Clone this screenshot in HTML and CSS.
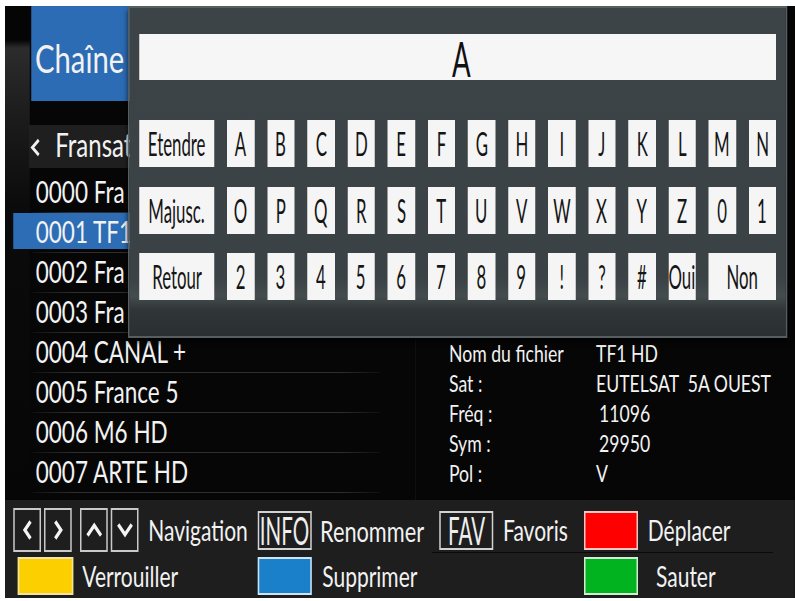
FILE: index.html
```html
<!DOCTYPE html>
<html lang="fr">
<head>
<meta charset="utf-8">
<title>Chaîne – Renommer</title>
<link rel="stylesheet" href="styles.css">
</head>
<body>
<div class="screen">
  <div class="stage">
    <div class="main">
      <section class="list">
        <div class="title">Chaîne</div>
        <div class="group">
          <svg class="group-chev" viewBox="0 0 15 19" aria-hidden="true"><polyline points="12,2 3.5,9.5 12,17" /></svg>
          <span class="group-name">Fransat</span>
        </div>
        <ul class="channels">
          <li class="ch"><span class="ch-name">0000 Fra</span></li>
          <li class="ch sel"><span class="ch-name">0001 TF1</span></li>
          <li class="ch"><span class="ch-name">0002 Fra</span></li>
          <li class="ch"><span class="ch-name">0003 Fra</span></li>
          <li class="ch"><span class="ch-name">0004 CANAL +</span></li>
          <li class="ch"><span class="ch-name">0005 France 5</span></li>
          <li class="ch"><span class="ch-name">0006 M6 HD</span></li>
          <li class="ch"><span class="ch-name">0007 ARTE HD</span></li>
        </ul>
      </section>
      <section class="info">
        <dl class="info-grid">
          <dt>Nom du fichier</dt><dd>TF1 HD</dd>
          <dt>Sat :</dt><dd>EUTELSAT&nbsp; 5A OUEST</dd>
          <dt>Fréq :</dt><dd class="num">11096</dd>
          <dt>Sym :</dt><dd class="num">29950</dd>
          <dt>Pol :</dt><dd>V</dd>
        </dl>
      </section>
      <div class="kbd">
        <div class="kbd-input"><span class="kbd-val">A</span></div>
        <div class="keys">
          <span class="key"><b>Etendre</b></span>
          <span class="key"><b>A</b></span>
          <span class="key"><b>B</b></span>
          <span class="key"><b>C</b></span>
          <span class="key"><b>D</b></span>
          <span class="key"><b>E</b></span>
          <span class="key"><b>F</b></span>
          <span class="key"><b>G</b></span>
          <span class="key"><b>H</b></span>
          <span class="key"><b>I</b></span>
          <span class="key"><b>J</b></span>
          <span class="key"><b>K</b></span>
          <span class="key"><b>L</b></span>
          <span class="key"><b>M</b></span>
          <span class="key"><b>N</b></span>
          <span class="key"><b>Majusc.</b></span>
          <span class="key"><b>O</b></span>
          <span class="key"><b>P</b></span>
          <span class="key"><b>Q</b></span>
          <span class="key"><b>R</b></span>
          <span class="key"><b>S</b></span>
          <span class="key"><b>T</b></span>
          <span class="key"><b>U</b></span>
          <span class="key"><b>V</b></span>
          <span class="key"><b>W</b></span>
          <span class="key"><b>X</b></span>
          <span class="key"><b>Y</b></span>
          <span class="key"><b>Z</b></span>
          <span class="key"><b>0</b></span>
          <span class="key"><b>1</b></span>
          <span class="key"><b>Retour</b></span>
          <span class="key"><b>2</b></span>
          <span class="key"><b>3</b></span>
          <span class="key"><b>4</b></span>
          <span class="key"><b>5</b></span>
          <span class="key"><b>6</b></span>
          <span class="key"><b>7</b></span>
          <span class="key"><b>8</b></span>
          <span class="key"><b>9</b></span>
          <span class="key"><b>!</b></span>
          <span class="key"><b>?</b></span>
          <span class="key"><b>#</b></span>
          <span class="key"><b>Oui</b></span>
          <span class="key key-non"><b>Non</b></span>
        </div>
      </div>
    </div>
    <footer class="foot">
      <div class="f-nav">
        <span class="navk"><svg class="chev-lr" viewBox="0 0 14 22" aria-hidden="true"><polyline points="11,2.5 3.5,11 11,19.5" /></svg></span>
        <span class="navk"><svg class="chev-lr" viewBox="0 0 14 22" aria-hidden="true"><polyline points="3,2.5 10.5,11 3,19.5" /></svg></span>
        <span class="navk navk-gap"><svg class="chev-ud" viewBox="0 0 24 16" aria-hidden="true"><polyline points="3,13.5 12,3.5 21,13.5" /></svg></span>
        <span class="navk"><svg class="chev-ud" viewBox="0 0 24 16" aria-hidden="true"><polyline points="3,2.5 12,12.5 21,2.5" /></svg></span>
        <span class="f-label">Navigation</span>
      </div>
      <span class="fkey"><b>INFO</b></span>
      <span class="f-txt pad-11">Renommer</span>
      <span class="fkey"><b>FAV</b></span>
      <span class="f-txt pad-13">Favoris</span>
      <span class="cbox red"></span>
      <span class="f-txt pad-13">Déplacer</span>
      <div class="f-line"></div>
      <div class="f-lock">
        <span class="cbox yellow"></span>
        <span class="f-label f-label-lock">Verrouiller</span>
      </div>
      <span class="cbox blue"></span>
      <span class="f-txt pad-14">Supprimer</span>
      <span class="cbox green col-6"></span>
      <span class="f-txt pad-24">Sauter</span>
    </footer>
  </div>
</div>
</body>
</html>
```

FILE: styles.css
```css
* { box-sizing: border-box; }
html, body { margin: 0; padding: 0; background: #ffffff; }
body { font-family: Lato, "Liberation Sans", sans-serif; }

.screen {
  margin: 6px 0 0 5px;
  width: 790px;
  height: 592px;
  background: #050505;
  overflow: hidden;
}
.stage {
  width: 1053px;
  height: 592px;
  transform: scaleX(0.75);
  transform-origin: 0 0;
  display: flex;
  flex-direction: column;
  color: #f2f2f2;
}

.main {
  position: relative;
  flex: 0 0 494px;
  display: grid;
  grid-template-columns: 547px 1fr;
  background: #060606;
}

/* ---------- channel list ---------- */
.list {
  background: linear-gradient(180deg, #050505 0, #050505 34px, #2c2c2c 42px, #1c1c1c 110px, #0b0b0b 200px, #060606 100%) no-repeat 0 0 / 33px 100%;
}
.title {
  margin-left: 35px;
  height: 95px;
  background: #2c6cb4;
  font-size: 39px;
  line-height: 38px;
  padding: 33px 0 0 5px;
  white-space: nowrap;
}
.group {
  margin: 24px 0 0 32px;
  width: 468px;
  height: 43px;
  background: #1f1f1f;
  display: flex;
  align-items: flex-start;
}
.group-chev {
  width: 15px;
  height: 19px;
  margin: 13px 0 0 1px;
  fill: none;
  stroke: #f2f2f2;
  stroke-width: 3.4;
}
.group-name {
  margin-left: 19px;
  font-size: 32px;
  line-height: 40px;
}
.channels {
  list-style: none;
  margin: 5px 0 0 11px;
  padding: 0;
  width: 489px;
}
.ch {
  height: 40px;
  margin-left: 26px;
  border-bottom: 1px solid #2a2a2a;
  border-image: linear-gradient(90deg, #101010, #2e2e2e 12%, #2e2e2e 88%, #101010) 1;
}
.ch-name {
  display: block;
  height: 36px;
  padding-left: 4px;
  font-size: 30px;
  line-height: 36px;
  white-space: nowrap;
}
.ch.sel .ch-name {
  margin-left: -26px;
  padding-left: 30px;
  background: #2c6db6;
}

/* ---------- info panel ---------- */
.info {
  padding: 332px 0 0 44px;
  border-left: 1px solid #141414;
}
.info-grid {
  margin: 0;
  display: grid;
  grid-template-columns: 196px 1fr;
  font-size: 23.5px;
  line-height: 30px;
  white-space: nowrap;
}
.info-grid dt, .info-grid dd { margin: 0; }
.info-grid .num { padding-left: 4px; }

/* ---------- keyboard dialog ---------- */
.kbd {
  position: absolute;
  left: 164px;
  top: 0;
  width: 879px;
  height: 332px;
  border: 2px solid #565e61;
  padding: 26px 13px 0;
  background: linear-gradient(180deg, #3c4447 0%, #3a4245 82%, #454c4e 88%, #303638 92%, #2a3032 100%);
  box-shadow: 0 4px 6px rgba(0, 0, 0, 0.7);
}
.kbd-input {
  height: 46px;
  background: #f6f6f6;
  color: #111111;
  font-size: 49px;
  line-height: 48px;
  text-align: center;
  padding-left: 11px;
}
.kbd-val { display: inline-block; transform: scaleX(0.75); }
.keys {
  margin-top: 40px;
  display: grid;
  grid-template-columns: 100px repeat(14, 36.5px);
  grid-auto-rows: 47px;
  column-gap: 17px;
  row-gap: 19.5px;
}
.key {
  background: #f5f5f5;
  color: #151515;
  display: flex;
  align-items: center;
  justify-content: center;
  font-size: 32px;
}
.key b {
  font-weight: 400;
  display: inline-block;
  transform: scaleX(0.7);
  white-space: nowrap;
}
.key-non { grid-column: span 2; }

/* ---------- footer ---------- */
.foot {
  flex: 0 0 98px;
  background: #1e1e1e;
  padding-top: 8px;
  display: grid;
  grid-template-columns: 337px 72px 170px 72px 121px 72px 1fr;
  grid-template-rows: 44px 4px 39px;
  align-items: center;
  font-size: 28px;
  white-space: nowrap;
}
.f-nav {
  display: flex;
  align-items: center;
  height: 44px;
  padding-left: 11px;
  gap: 4px;
}
.navk {
  width: 37px;
  height: 44px;
  border: 2px solid #c9c9c9;
  display: flex;
  align-items: center;
  justify-content: center;
}
.navk-gap { margin-left: 7px; }
.chev-lr, .chev-ud {
  fill: none;
  stroke: #f4f4f4;
  stroke-width: 4;
}
.chev-lr { width: 14px; height: 22px; }
.chev-ud { width: 24px; height: 16px; }
.f-label { margin-left: 9px; }
.fkey {
  height: 39px;
  border: 2px solid #d2d2d2;
  display: flex;
  align-items: center;
  justify-content: center;
  font-size: 38px;
  color: #eeeeee;
}
.fkey b {
  font-weight: 400;
  display: inline-block;
  transform: scaleX(0.72);
}
.pad-11 { padding-left: 11px; font-size: 29px; }
.pad-13 { padding-left: 13px; }
.pad-14 { padding-left: 14px; }
.pad-24 { padding-left: 24px; }
.cbox {
  height: 38px;
  border: 2px solid #e6e6e6;
}
.cbox.red { height: 39px; background: #fe0000; border-color: #f3c6c6; }
.cbox.yellow { width: 74px; background: #fbcf00; border-color: #f1e2a6; }
.cbox.blue { background: #1a80ca; border-color: #cfe2f1; }
.cbox.green { background: #00b31f; border-color: #cfeed4; }
.col-6 { grid-column: 6; }
.f-line {
  grid-column: 4 / 8;
  align-self: start;
  height: 1px;
  margin: 0 29px 0 -10px;
  background: #0a0a0a;
}
.f-lock {
  display: flex;
  align-items: center;
  padding-left: 17px;
}
.f-label-lock { margin-left: 12px; }
```
